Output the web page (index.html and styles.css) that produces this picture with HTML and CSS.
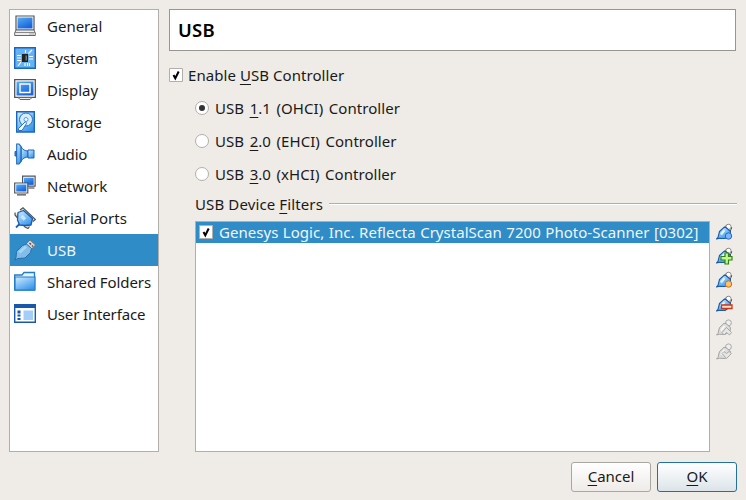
FILE: index.html
```html
<!DOCTYPE html>
<html lang="en">
<head>
<meta charset="utf-8">
<title>Settings - USB</title>
<link rel="stylesheet" href="styles.css">
</head>
<body>
<svg class="defs" width="0" height="0">
  <defs>
    <linearGradient id="blue" x1="0" y1="0" x2="0.6" y2="1"><stop offset="0" stop-color="#55adf9"/><stop offset="1" stop-color="#1763d8"/></linearGradient>
    <linearGradient id="sky" x1="0" y1="0" x2="0.7" y2="1"><stop offset="0" stop-color="#d2efff"/><stop offset="1" stop-color="#3a96ec"/></linearGradient>
    <symbol id="plug" viewBox="0 0 18 18">
      <path d="M8.500 4 12 1.300 15.800 4.800 14 8.500z" fill="#fff" stroke="#555"/>
      <circle cx="12.500" cy="3.800" r="2.600" fill="#fff" stroke="#777" stroke-width=".8"/>
      <path d="M.5 16 2 14.500 3.500 8.500 8 4.300 10 4.500 14.500 8.500 14 12 9 15.500 3.500 15.200z" fill="url(#sky)" stroke="#175cae" stroke-width="1.100" stroke-linejoin="round"/>
      <path d="M5 11.500 8.500 7" stroke="#fff" stroke-width="2.200" opacity=".8"/>
    </symbol>
    <symbol id="plug-off" viewBox="0 0 18 18">
      <circle cx="12.500" cy="3.800" r="2.900" fill="#eee" stroke="#aaa"/>
      <path d="M.5 16 2 14.500 3.500 8.500 8 4.300 10 4.500 14.500 8.500 14 12 9 15.500 3.500 15.200z" fill="#dedddb" stroke="#a3a3a3" stroke-linejoin="round"/>
      <path d="M5 11.500 8.500 7" stroke="#f8f8f8" stroke-width="2"/>
    </symbol>
  </defs>
</svg>
<main class="dialog">
  <div class="content">
    <nav class="sidebar">
      <a class="item"><svg class="icon" viewBox="0 0 22 22"><path d="M2 1h18v14H2z" fill="#fff" stroke="#555" stroke-width="1.2"/><path d="M3.5 2.5h15v11h-15z" fill="url(#blue)"/><path d="M2 15h18l1.3 3v2.5H.7V18z" fill="#eee" stroke="#666"/><path d="M1 17.5h20" stroke="#888"/><path d="M15 19h5" stroke="#aaa"/></svg><span>General</span></a>
      <a class="item"><svg class="icon" viewBox="0 0 22 22"><path d="M.7.7h20.6v20.6H.7z" fill="#65b3f5" stroke="#1b65bb" stroke-width="1.4"/><path d="M14.5 6.5 18 3M11.5 6V3M3 8.5h4M3 11h4M3 13.500h4M15 9.500h4M15 12h4M11 16v3M13.500 16v3M15.500 16v3M7 15l-3 4" stroke="#fff" stroke-width="1.1"/><path d="M8 7h6v8H8z" fill="#222"/><path d="M11.500 8.500h1.5v5h-1.5z" fill="#777"/></svg><span>System</span></a>
      <a class="item"><svg class="icon" viewBox="0 0 22 22"><path d="M.7.7h20.6v17.600H.7z" fill="#fff" stroke="#555" stroke-width="1.3"/><path d="M2.500 2.500h17v14h-17z" fill="url(#blue)"/><path d="M6 5h10v8.500H6z" fill="none" stroke="#fff" stroke-width="1.4"/><path d="M4 18.500h14l-2 2H6z" fill="#eee" stroke="#666"/></svg><span>Display</span></a>
      <a class="item"><svg class="icon" viewBox="0 0 22 22"><path d="M2.700.7h17.600v20.300H2.700z" fill="url(#sky)" stroke="#1b65bb" stroke-width="1.4"/><circle cx="12" cy="8.500" r="6.500" fill="#d5edff" stroke="#2574c3"/><circle cx="12" cy="8.500" r="2" fill="#fff" stroke="#4d9de6"/><path d="M11.500 10.500 4.500 17.500v2h3.500l4.500-7z" fill="#fff" stroke="#2574c3"/></svg><span>Storage</span></a>
      <a class="item"><svg class="icon" viewBox="0 0 22 22"><path d="M1 8.500h2V13H1z" fill="#2b83dc" stroke="#1b65bb"/><path d="M7 3.500C8.500 6.500 11 8 14 8v6c-3 0-5.500 1.500-7 4.500z" fill="url(#sky)" stroke="#1b65bb"/><path d="M14 7h6v8h-6z" fill="url(#sky)" stroke="#1b65bb"/><path d="M2.700 1H5l2 2.500v15L5 21H2.700z" fill="url(#sky)" stroke="#1b65bb" stroke-width="1.100"/></svg><span class="t-audio">Audio</span></a>
      <a class="item"><svg class="icon" viewBox="0 0 22 22"><path d="M8.600 1.200h12.500v10H8.600z" fill="#fff" stroke="#555" stroke-width="1.200"/><path d="M10 2.700h9.700v7.200H10z" fill="url(#blue)"/><path d="M14.500 13h6" stroke="#777" stroke-width="1.500"/><path d="M.7 8H13.800V18H.7z" fill="#fff" stroke="#555" stroke-width="1.200"/><path d="M2.200 9.500h10.200V16.500H2.200z" fill="url(#blue)"/><path d="M3 19.800h9" stroke="#777" stroke-width="1.700"/></svg><span>Network</span></a>
      <a class="item"><svg class="icon" viewBox="0 0 22 22"><path d="M6 3 9 .8 21.500 12.500 19 14.500" fill="#ddd" stroke="#555" stroke-width="1.200"/><path d="M1 5.500V8l10 12 3 1.500 1.500-2" fill="#ddd" stroke="#555" stroke-width="1.200"/><path d="M4 5.500 9.500 3.500 18.500 11.500 17 18 11 18.500 5.500 18 3.500 13z" fill="url(#sky)" stroke="#175cae" stroke-width="1.300" stroke-linejoin="round"/><path d="M7.500 9 11 12.500" stroke="#e0f4ff" stroke-width="3.500" opacity=".7"/><path d="M5.500 17 2 20.500" stroke="#1864b2" stroke-width="1.800"/></svg><span>Serial Ports</span></a>
      <a class="item selected"><svg class="icon" viewBox="0 0 22 22"><path d="M12 5 16 1 21.500 6 17.500 10z" fill="#d3d8dd" stroke="#777"/><path d="M15.500 4 17 5.500M18 6.500l1 1" stroke="#555" stroke-width="1.500"/><path d="M.8 21 2 18.500 2.500 12.500 8.500 6.500 12.500 5 17.500 9.500 16.500 13.500 11 19 4 19.500z" fill="#7fbdea" stroke="#2b6ca8" stroke-linejoin="round"/><path d="M5.500 13.500 12 7.500" stroke="#a9d5f2" stroke-width="3"/></svg><span>USB</span></a>
      <a class="item"><svg class="icon" viewBox="0 0 22 22"><path d="M.7 19V4H8l2-2.500h10.500V19z" fill="#e5f5ff" stroke="#217dc5" stroke-width="1.300"/><path d="M1 6h20v13H1z" fill="url(#sky)" stroke="#217dc5" stroke-width="1.200"/></svg><span class="t-shared">Shared Folders</span></a>
      <a class="item"><svg class="icon" viewBox="0 0 22 22"><path d="M.7 1.700h20.600v17.600H.7z" fill="#fff" stroke="#1859ab" stroke-width="1.400"/><path d="M1 2h20v3H1z" fill="#1859ab"/><path d="M3.500 7.500h3v3h-3zM3.500 11.500h3v2h-3zM3.500 15h3v2h-3z" fill="#1555ad"/><path d="M9.500 7.500h9.500v9.500H9.500z" fill="#a3cefa"/></svg><span class="t-ui">User Interface</span></a>
    </nav>
    <section class="page">
      <h1 class="title"><span>USB</span></h1>
      <label class="enable"><svg class="box" viewBox="0 0 14 14"><path d="M.5.5h13v13H.5z" fill="#fff" stroke="#b2afab"/><path d="M4.500 7 6.300 10.300 9.700 3.500" fill="none" stroke="#000" stroke-width="2"/></svg><span>Enable <u>U</u>SB Controller</span></label>
      <div class="options">
        <label class="option"><i class="radio on"></i><span>USB <u>1</u>.1 (OHCI) Controller</span></label>
        <label class="option"><i class="radio"></i><span>USB <u>2</u>.0 (EHCI) Controller</span></label>
        <label class="option"><i class="radio"></i><span>USB <u>3</u>.0 (xHCI) Controller</span></label>
        <div class="group"><span>USB Device <u>F</u>ilters</span><i class="rule"></i></div>
        <div class="filters">
          <div class="list"><div class="row"><svg class="box" viewBox="0 0 14 14"><path d="M.5.5h13v13H.5z" fill="#fff" stroke="#b2afab"/><path d="M4.500 7 6.300 10.300 9.700 3.500" fill="none" stroke="#000" stroke-width="2"/></svg><span>Genesys Logic, Inc. Reflecta CrystalScan 7200 Photo-Scanner [0302]</span></div></div>
          <div class="tools">
            <svg class="tool" viewBox="0 0 18 18"><use href="#plug"/><circle cx="12.500" cy="13" r="3.200" fill="#7ab8ff" stroke="#2467ce"/></svg>
            <svg class="tool" viewBox="0 0 18 18"><use href="#plug"/><path d="M9 6h3.500v3.500H16V13h-3.500v4H9v-4H5V9.500h4z" fill="#c3f58f" stroke="#328216" stroke-width="1.200"/></svg>
            <svg class="tool" viewBox="0 0 18 18"><use href="#plug"/><circle cx="12.500" cy="13" r="3.200" fill="#ffc36b" stroke="#d36a0d"/></svg>
            <svg class="tool" viewBox="0 0 18 18"><use href="#plug"/><path d="M5.500 10H16v3.500H5.500z" fill="#ffe0cc" stroke="#ce3512" stroke-width="1.300"/></svg>
            <svg class="tool" viewBox="0 0 18 18"><use href="#plug-off"/><path d="M6 13.500 10.500 8.500 15.500 13.500 13.500 16 10.500 13.500 8 16z" fill="#e7e6e4" stroke="#aaa"/></svg>
            <svg class="tool" viewBox="0 0 18 18"><use href="#plug-off"/><path d="M6 10.500 8 8.500 10.500 10.500 13 8.500 15.500 10.500 10.500 15.500z" fill="#e7e6e4" stroke="#aaa"/></svg>
          </div>
        </div>
      </div>
    </section>
  </div>
  <footer class="buttons"><button class="btn"><span><u>C</u>ancel</span></button><button class="btn primary"><span><u>O</u>K</span></button></footer>
</main>
</body>
</html>
```
FILE: styles.css
```css
* { box-sizing: border-box; }
body { margin: 0; background: #efebe7; color: #1a1a1a; font: 15px/20px "Noto Sans", sans-serif; overflow: hidden; }
.defs { display: block; }
.dialog { width: 746px; height: 500px; padding: 9px 9px 9px; display: flex; flex-direction: column; }
.content { display: flex; gap: 10px; height: 443px; }
.sidebar { width: 150px; background: #fff; border: 1px solid #b2afab; }
.item { display: flex; align-items: center; height: 32px; padding-left: 4px; gap: 11px; white-space: nowrap; }
.t-shared { letter-spacing: -.08px; }
.t-audio, .t-ui { letter-spacing: -.15px; }
.selected { background: #308cc6; color: #eef6fb; }
.icon { width: 22px; height: 22px; flex: none; }
.page { width: 568px; display: flex; flex-direction: column; }
.title { margin: 0; height: 42px; width: 567px; padding-left: 8px; display: flex; align-items: center; background: #fff; border: 1px solid #999692; color: #000; font-size: 18.5px; font-weight: 600; letter-spacing: .2px; }
.enable { height: 20px; margin-top: 14px; display: flex; align-items: center; gap: 5px; letter-spacing: .06px; }
.box { width: 14px; height: 14px; flex: none; }
u { text-decoration: underline; text-decoration-thickness: 1px; text-underline-offset: 3px; text-decoration-skip-ink: none; }
.options { padding-left: 26px; padding-top: 6px; }
.option { height: 33px; display: flex; align-items: center; gap: 6px; letter-spacing: .05px; word-spacing: 1.6px; }
.radio { width: 14px; height: 14px; border: 1px solid #b2afab; border-radius: 50%; background: #fff; display: grid; place-items: center; }
.on::after { content: ""; width: 6px; height: 6px; border-radius: 50%; background: #333; }
.group { height: 20px; margin-top: 4px; display: flex; align-items: center; letter-spacing: .12px; }
.group span { width: 134px; white-space: nowrap; }
.rule { flex: 1; height: 2px; margin-top: -1px; border-top: 1px solid #b2afab; border-bottom: 1px solid #fff; }
.filters { display: flex; gap: 7px; margin-top: 7px; }
.list { width: 515px; height: 231px; background: #fff; border: 1px solid #b2afab; }
.row { height: 21px; padding-bottom: 1px; display: flex; align-items: center; gap: 6px; padding-left: 3px; background: #308cc6; color: #eef6fb; white-space: nowrap; letter-spacing: .03px; word-spacing: .6px; }
.row .box { margin-top: -1px; }
.tools { display: flex; flex-direction: column; gap: 6px; padding-top: 2px; margin-left: -1px; }
.tool { width: 18px; height: 18px; }
.buttons { display: flex; justify-content: flex-end; gap: 6px; margin-top: 10px; }
.btn { width: 80px; height: 30px; padding: 0 0 2px; border: 1px solid #aaa7a3; border-radius: 3px; background: linear-gradient(#fff, #eeebe8); font: inherit; color: inherit; }
.primary { border-color: #21709f; background: linear-gradient(#fff, #dce4e9); }
```
